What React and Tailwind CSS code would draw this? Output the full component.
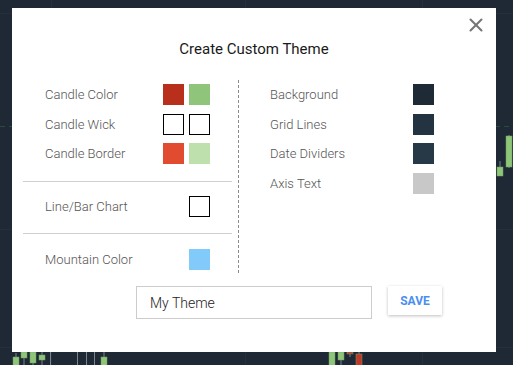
import { X } from "lucide-react"

const leftRows = [
    { label: "Candle Color", colors: ["#b8301b", "#8fc57a"] },
    { label: "Candle Wick", colors: ["outline", "outline"] },
    { label: "Candle Border", colors: ["#e14b2f", "#bde0ac"] },
]

const rightRows = [
    { label: "Background", color: "#1e2a36" },
    { label: "Grid Lines", color: "#243342" },
    { label: "Date Dividers", color: "#273847" },
    { label: "Axis Text", color: "#c8c8c9" },
]

// candles peeking out from under the modal
const candles = [
    { x: 13, top: 357, bottom: 366, wick: [353, 366], color: "#8fc57a" },
    { x: 21, top: 352, bottom: 358, wick: [348, 366], color: "#8fc57a" },
    { x: 30, top: 352, bottom: 363, wick: [349, 366], color: "#8fc57a" },
    { x: 39, top: 355, bottom: 360, wick: [352, 366], color: "#8fc57a" },
    { x: 101, top: 357, bottom: 366, wick: [352, 366], color: "#8fc57a" },
    { x: 329, top: 352, bottom: 366, wick: [350, 366], color: "#8fc57a" },
    { x: 338, top: 352, bottom: 360, wick: [350, 366], color: "#8fc57a" },
    { x: 347, top: 352, bottom: 354, wick: [350, 357], color: "#c0392b" },
    { x: 356, top: 354, bottom: 366, wick: [351, 366], color: "#c0392b" },
    { x: 497, top: 167, bottom: 176, wick: [161, 176], color: "#8fc57a" },
    { x: 506, top: 136, bottom: 167, wick: [135, 168], color: "#8fc57a" },
]

const wicks = [50, 77, 86, 94]

function ChartBackground() {
    return (
        <svg className="absolute inset-0" width="513" height="365">
            <rect width="513" height="365" fill="#1e2935" />
            {[51, 245, 422].map((x) => (
                <line key={x} x1={x + 0.5} y1="0" x2={x + 0.5} y2="365" stroke="#24303c" />
            ))}
            {[13, 229, 347].map((y) => (
                <line key={y} x1="0" y1={y + 0.5} x2="513" y2={y + 0.5} stroke="#232f3b" />
            ))}
            <line x1="0" y1="126.5" x2="513" y2="126.5" stroke="#2f4a3c" strokeDasharray="5 4" />
            {wicks.map((x) => (
                <line key={x} x1={x + 0.5} y1="352" x2={x + 0.5} y2="365" stroke="#7c848c" />
            ))}
            {candles.map((c) => (
                <g key={c.x}>
                    <line x1={c.x + 3} y1={c.wick[0]} x2={c.x + 3} y2={c.wick[1]} stroke="#7c848c" />
                    <rect x={c.x} y={c.top} width="6" height={c.bottom - c.top} fill={c.color} stroke="#6f9e5e" strokeWidth="0.5" />
                </g>
            ))}
        </svg>
    )
}

function Swatch({ color }) {
    if (color === "outline") {
        return <div className="w-[21px] h-[21px] border border-black bg-white" />
    }
    return <div className="w-[21px] h-[21px]" style={{ backgroundColor: color }} />
}

export default function App() {
    return (
        <div className="relative w-[513px] h-[365px] overflow-hidden font-['Roboto',sans-serif]">
            <ChartBackground />

            <div className="relative ml-[12px] mt-[8px] w-[484px] h-[344px] bg-white">
                <button className="absolute right-[9px] top-[6px] text-[#777] cursor-pointer">
                    <X size={22} strokeWidth={2.3} />
                </button>

                <h2 className="pt-[31px] text-center text-[15px] leading-[20px] text-[#1a1a1a]">Create Custom Theme</h2>

                <div className="flex mt-[21px] h-[195px]">
                    <div className="ml-[11px] w-[209px] pt-[4px]">
                        <div className="flex flex-col gap-[8.5px] px-[22px]">
                            {leftRows.map((row) => (
                                <div key={row.label} className="flex items-center justify-between h-[21px]">
                                    <span className="pt-px text-[13px] font-light text-[#555]">{row.label}</span>
                                    <div className="flex gap-[5px]">
                                        {row.colors.map((c, i) => (
                                            <Swatch key={i} color={c} />
                                        ))}
                                    </div>
                                </div>
                            ))}
                        </div>

                        <div className="mt-[17px] h-px bg-[#cfcfcf]" />

                        <div className="flex items-center justify-between h-[21px] mt-[14px] px-[22px]">
                            <span className="pt-px text-[13px] font-light text-[#555]">Line/Bar Chart</span>
                            <Swatch color="outline" />
                        </div>

                        <div className="mt-[16px] h-px bg-[#cfcfcf]" />

                        <div className="flex items-center justify-between h-[21px] mt-[15px] px-[22px]">
                            <span className="pt-px text-[13px] font-light text-[#555]">Mountain Color</span>
                            <Swatch color="#82cafa" />
                        </div>
                    </div>

                    <div className="ml-[6px] w-px h-full bg-[repeating-linear-gradient(to_bottom,#8a8a8a_0_3px,transparent_3px_5px)]" />

                    <div className="flex-1 pt-[4px] pl-[31px] pr-[62px]">
                        <div className="flex flex-col gap-[8.5px]">
                            {rightRows.map((row) => (
                                <div key={row.label} className="flex items-center justify-between h-[21px]">
                                    <span className="pt-px text-[13px] font-light text-[#555]">{row.label}</span>
                                    <Swatch color={row.color} />
                                </div>
                            ))}
                        </div>
                    </div>
                </div>

                <div className="flex items-start gap-[16px] mt-[11px] ml-[124px]">
                    <input
                        defaultValue="My Theme"
                        className="w-[236px] h-[33px] border border-[#cccccc] pl-[13px] text-[14px] font-light text-[#222] outline-none"
                    />
                    <button className="w-[54px] h-[29px] bg-white shadow-[0_1px_3px_rgba(0,0,0,0.25)] text-[12px] font-bold text-[#4a8ff0] cursor-pointer">
                        SAVE
                    </button>
                </div>
            </div>
        </div>
    )
}
